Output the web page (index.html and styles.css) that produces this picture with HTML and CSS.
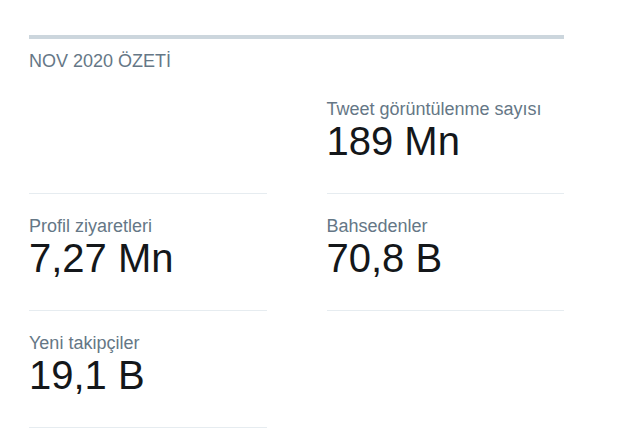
FILE: index.html
```html
<!DOCTYPE html>
<html lang="tr">
<head>
<meta charset="utf-8">
<title>Özet</title>
<link rel="stylesheet" href="styles.css">
</head>
<body>
<section class="summary">
  <h2 class="summary-title">NOV 2020 ÖZETİ</h2>
  <div class="stats">
    <div class="stat stat-empty"></div>
    <div class="stat">
      <div class="stat-label">Tweet görüntülenme sayısı</div>
      <div class="stat-value">189 Mn</div>
    </div>
    <div class="stat">
      <div class="stat-label">Profil ziyaretleri</div>
      <div class="stat-value">7,27 Mn</div>
    </div>
    <div class="stat">
      <div class="stat-label">Bahsedenler</div>
      <div class="stat-value">70,8 B</div>
    </div>
    <div class="stat">
      <div class="stat-label">Yeni takipçiler</div>
      <div class="stat-value">19,1 B</div>
    </div>
  </div>
</section>
</body>
</html>
```
FILE: styles.css
```css
html, body {
  margin: 0;
  padding: 0;
  background: #ffffff;
}

body {
  font-family: "Liberation Sans", Arial, sans-serif;
  padding-top: 35px;
}

.summary {
  width: 535px;
  margin-left: 29px;
  border-top: 4px solid #ccd6dd;
}

.summary-title {
  margin: 10px 0 0 0;
  font-size: 18px;
  font-weight: normal;
  line-height: 24px;
  color: #657786;
}

.stats {
  margin-top: 4px;
  display: grid;
  grid-template-columns: 1fr 1fr;
  column-gap: 60px;
}

.stat {
  padding: 22px 0 30px 0;
  border-bottom: 1px solid #e6ecf0;
  min-height: 64px;
}

.stat-label {
  font-size: 18px;
  line-height: 20px;
  color: #657786;
}

.stat-value {
  font-size: 40px;
  line-height: 44px;
  color: #14171a;
}
```
